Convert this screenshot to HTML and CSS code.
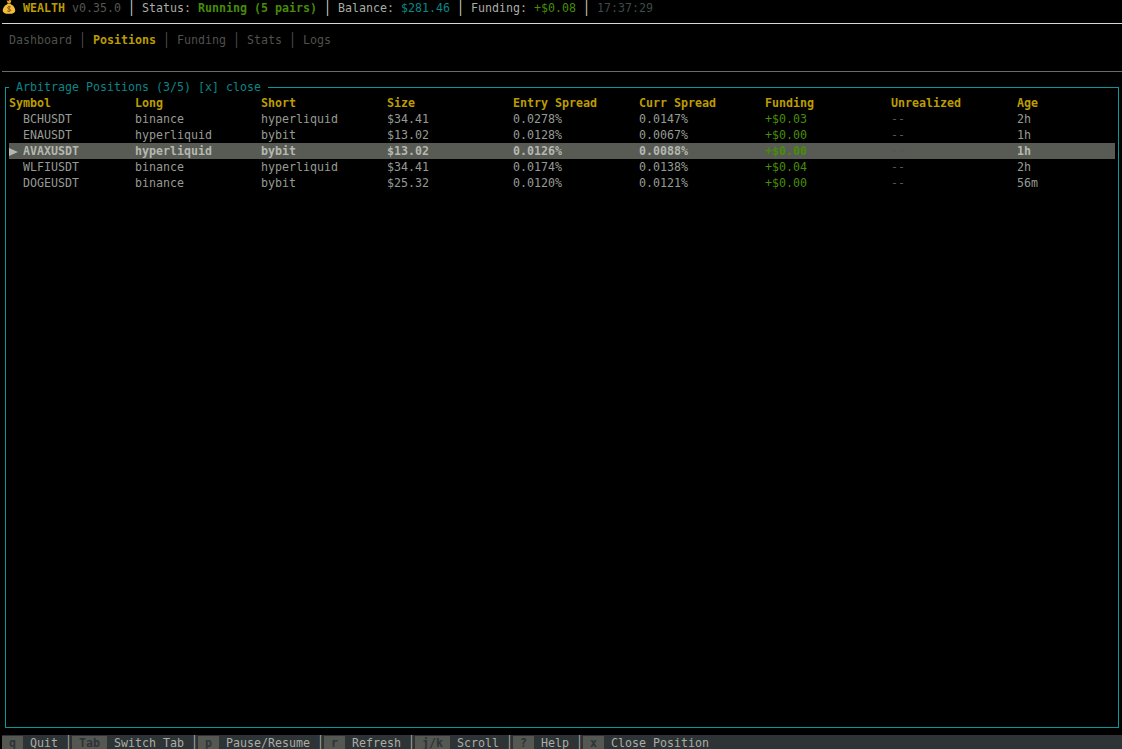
FILE: index.html
```html
<!DOCTYPE html>
<html>

<head>
    <title>WEALTH - Positions</title>

    <link rel="stylesheet" href="styles.css">
</head>

<body>

    <main class="app">

        <header class="line status-bar"><svg class="bag" viewBox="0 1 14 16" aria-hidden="true"><path d="M4.6 1.2 L6.2 2.1 L7.6 1.1 L9.4 1.6 L8.4 4 L5.6 4 Z" fill="#e8a92c"/><path d="M5.4 4 H8.6 L8.4 5.2 H5.6 Z" fill="#a8641a"/><path d="M5.6 5 C2.6 6.6 .8 9 .8 11.2 C.8 13.8 3 14.8 7 14.8 C11 14.8 13.2 13.8 13.2 11.2 C13.2 9 11.4 6.6 8.4 5 Z" fill="#f2bd3c"/><path d="M8.8 8 C8 7.3 5.6 7.3 5.6 8.8 C5.6 10.4 8.8 9.8 8.8 11.3 C8.8 12.7 6.2 12.6 5.2 11.8 M7.1 6.8 V13" fill="none" stroke="#8a5a14" stroke-width="1"/></svg> <b class="yellow">WEALTH</b> <span class="faint">v0.35.0</span> <span class="sep">│</span> <span class="label">Status:</span> <b class="green">Running (5 pairs)</b> <span class="sep">│</span> <span class="label">Balance:</span> <span class="cyan">$281.46</span> <span class="sep">│</span> <span class="label">Funding:</span> <span class="green">+$0.08</span> <span class="sep">│</span> <span class="clock">17:37:29</span></header>

        <hr class="rule rule-top">

        <nav class="line tabs"> Dashboard <span class="sep">│</span> <b class="yellow">Positions</b> <span class="sep">│</span> Funding <span class="sep">│</span> Stats <span class="sep">│</span> Logs</nav>

        <hr class="rule rule-bottom">

        <fieldset class="panel">
            <legend class="panel-title">Arbitrage Positions (3/5) [x] close</legend>

            <div class="row row-head">
                <span>Symbol</span>
                <span>Long</span>
                <span>Short</span>
                <span>Size</span>
                <span>Entry Spread</span>
                <span>Curr Spread</span>
                <span>Funding</span>
                <span>Unrealized</span>
                <span>Age</span>
            </div>
            <div class="row">
                <span>  BCHUSDT</span>
                <span>binance</span>
                <span>hyperliquid</span>
                <span>$34.41</span>
                <span>0.0278%</span>
                <span>0.0147%</span>
                <span class="green">+$0.03</span>
                <span class="faint">--</span>
                <span>2h</span>
            </div>
            <div class="row">
                <span>  ENAUSDT</span>
                <span>hyperliquid</span>
                <span>bybit</span>
                <span>$13.02</span>
                <span>0.0128%</span>
                <span>0.0067%</span>
                <span class="green">+$0.00</span>
                <span class="faint">--</span>
                <span>1h</span>
            </div>
            <div class="row row-selected">
                <span><i class="marker"></i>AVAXUSDT</span>
                <span>hyperliquid</span>
                <span>bybit</span>
                <span>$13.02</span>
                <span>0.0126%</span>
                <span>0.0088%</span>
                <span class="green">+$0.00</span>
                <span class="faint">--</span>
                <span>1h</span>
            </div>
            <div class="row">
                <span>  WLFIUSDT</span>
                <span>binance</span>
                <span>hyperliquid</span>
                <span>$34.41</span>
                <span>0.0174%</span>
                <span>0.0138%</span>
                <span class="green">+$0.04</span>
                <span class="faint">--</span>
                <span>2h</span>
            </div>
            <div class="row">
                <span>  DOGEUSDT</span>
                <span>binance</span>
                <span>bybit</span>
                <span>$25.32</span>
                <span>0.0120%</span>
                <span>0.0121%</span>
                <span class="green">+$0.00</span>
                <span class="faint">--</span>
                <span>56m</span>
            </div>
        </fieldset>

        <footer class="line keys"><span class="key"> q </span> Quit <span class="sep">│</span><span class="key"> Tab </span> Switch Tab <span class="sep">│</span><span class="key"> p </span> Pause/Resume <span class="sep">│</span><span class="key"> r </span> Refresh <span class="sep">│</span><span class="key"> j/k </span> Scroll <span class="sep">│</span><span class="key"> ? </span> Help <span class="sep">│</span><span class="key"> x </span> Close Position</footer>

    </main>

</body>

</html>
```

FILE: styles.css
```css
* {
    margin: 0;
    padding: 0;
    box-sizing: border-box;
}

html,
body {
    width: 100%;
    height: 100%;
    overflow: hidden;
    background-color: #000;
}

.app {
    display: flex;
    flex-direction: column;
    height: 751px;
    padding-left: 2px;
    font-family: "DejaVu Sans Mono", monospace;
    font-size: 11.63px;
    line-height: 16px;
    color: #969a94;
}

.line {
    height: 16px;
    white-space: pre;
    overflow: hidden;
}

.sep {
    display: inline-block;
    transform: scaleY(1.25);
}

.yellow {
    color: #bc9c00;
}

.green {
    color: #478c08;
}

.cyan {
    color: #0b8587;
}

.faint {
    color: #555753;
}

.status-bar {
    color: #d3d7cf;
}

.label {
    color: #a9ada6;
}

.clock {
    color: #3f4a4a;
}

.bag {
    display: inline-block;
    width: 14px;
    height: 16px;
    vertical-align: top;
}

.rule {
    border: 0;
    height: 1px;
}

.rule-top {
    margin: 7px 0 8px;
    background-color: #d3d7cf;
}

.rule-bottom {
    margin: 23px 0 7px;
    background-color: #6a6a68;
}

.tabs {
    color: #4f514d;
}

.panel {
    flex: 1;
    min-height: 0;
    margin: 0 3px 7px;
    padding: 0 3px;
    border: 1px solid #06989a;
}

.panel-title {
    height: 16px;
    padding: 0 7px;
    color: #0b8587;
}

.row {
    display: grid;
    grid-template-columns: repeat(8, 126px) 1fr;
    height: 16px;
    white-space: pre;
}

.row-head {
    font-weight: bold;
    color: #bc9c00;
}

.row-selected {
    background-color: #585a54;
    font-weight: bold;
    color: #b4b8b1;
}

.marker {
    display: inline-block;
    width: 0;
    height: 0;
    margin-right: 5px;
    border-left: 9px solid #b4b8b1;
    border-top: 4.5px solid transparent;
    border-bottom: 4.5px solid transparent;
    vertical-align: -1px;
}

.keys {
    background-color: #2e3436;
    color: #a9ada6;
}

.key {
    background-color: #555753;
    color: #2e3436;
    font-weight: bold;
}
```
